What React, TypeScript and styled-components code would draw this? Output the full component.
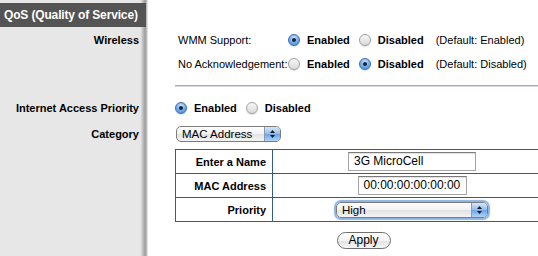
import React from "react";
import styled, { createGlobalStyle } from "styled-components";

const Global = createGlobalStyle`
  html, body { margin: 0; padding: 0; background: #fff; }
  body { font-family: "Liberation Sans", Arial, sans-serif; overflow: hidden; }
`;

const Page = styled.div`
  width: 538px;
  height: 256px;
  overflow: hidden;
  display: grid;
  grid-template-columns: 146px 1fr;
  grid-auto-rows: min-content;
  background: linear-gradient(
    to right,
    #e7e7e7 0,
    #e7e7e7 140px,
    #dedede 141px,
    #bdbdbd 143px,
    #9c9c9c 145px,
    #c4c4c4 147px,
    #ffffff 148px,
    #ffffff 100%
  );
  color: #000;
`;

const TitleCell = styled.div`
  height: 28px;
  padding-top: 3px;
  box-sizing: border-box;
`;

const Title = styled.div`
  height: 24px;
  background: #545454;
  color: #fff;
  font-weight: bold;
  font-size: 12px;
  letter-spacing: -0.15px;
  line-height: 24px;
  padding-left: 4px;
  white-space: nowrap;
`;

const Label = styled.div<{ $h: number }>`
  height: ${(p) => p.$h}px;
  display: flex;
  align-items: center;
  justify-content: flex-end;
  padding-right: 7px;
  font-size: 11px;
  font-weight: bold;
  white-space: nowrap;
`;

const Cell = styled.div<{ $h?: number; $pad?: number }>`
  ${(p) => (p.$h ? `height: ${p.$h}px;` : "")}
  display: flex;
  align-items: center;
  padding-left: ${(p) => p.$pad ?? 29}px;
  font-size: 11px;
  white-space: nowrap;
`;

const FieldName = styled.span`
  width: 110px;
  flex: none;
`;

const Option = styled.label<{ $gap?: number }>`
  display: inline-flex;
  align-items: center;
  gap: 7px;
  margin-right: ${(p) => p.$gap ?? 9}px;
  font-weight: bold;
`;

const Radio = styled.span<{ $on?: boolean }>`
  width: 12px;
  height: 12px;
  border-radius: 50%;
  flex: none;
  box-sizing: border-box;
  position: relative;
  border: 1px solid ${(p) => (p.$on ? "#3b6fb5" : "#a0a0a0")};
  background: ${(p) =>
    p.$on
      ? "radial-gradient(circle at 50% 30%, #d6e8fc 0, #86b6ec 40%, #3d82d6 100%)"
      : "linear-gradient(#f7f7f7, #dadada)"};
  box-shadow: 0 1px 1px rgba(0, 0, 0, 0.15);
  &::after {
    content: "";
    display: ${(p) => (p.$on ? "block" : "none")};
    position: absolute;
    left: 50%;
    top: 50%;
    width: 4px;
    height: 4px;
    margin: -2px 0 0 -2px;
    border-radius: 50%;
    background: #15233e;
  }
`;

const Hint = styled.span`
  margin-left: 1px;
`;

const SeparatorCell = styled.div`
  height: 18px;
  padding-left: 29px;
  padding-top: 9px;
  box-sizing: border-box;
`;

const Rule = styled.div`
  border-top: 1px solid #a9a9bb;
  box-shadow: 0 1px 0 #d8d8e2;
`;

const Select = styled.div<{ $w: number; $focus?: boolean }>`
  width: ${(p) => p.$w}px;
  height: 16px;
  box-sizing: border-box;
  border: 1px solid #7d7d7d;
  border-radius: 5px;
  background: linear-gradient(#ffffff 0, #f1f1f1 50%, #e2e2e2 51%, #f4f4f4 100%);
  display: flex;
  align-items: center;
  font-size: 11.5px;
  overflow: hidden;
  text-align: left;
  ${(p) => (p.$focus ? "box-shadow: 0 0 1px 2px #8cb4e6;" : "")}
`;

const SelectText = styled.span`
  flex: 1;
  padding-left: 5px;
  line-height: 14px;
  text-align: left;
`;

const SelectArrows = styled.span`
  width: 15px;
  height: 100%;
  border-left: 1px solid #8a9ab0;
  background: linear-gradient(#d7e7fa 0, #8fbbed 50%, #6aa3e6 51%, #b3d3f6 100%);
  display: flex;
  align-items: center;
  justify-content: center;
`;

const TableWrap = styled.div`
  padding-left: 29px;
  padding-top: 3px;
`;

const Table = styled.table`
  width: 377px;
  border-collapse: collapse;
  font-size: 11px;
`;

const Td = styled.td<{ $label?: boolean }>`
  border: 1px solid #2f5e8c;
  height: 24px;
  padding: 0 6px 0 0;
  box-sizing: border-box;
  ${(p) =>
    p.$label
      ? "width: 97px; text-align: right; font-weight: bold;"
      : "text-align: center;"}
`;

const Centered = styled.div`
  display: flex;
  justify-content: center;
  padding-left: 6px;
`;

const TextInput = styled.div<{ $w: number }>`
  width: ${(p) => p.$w}px;
  height: 19px;
  box-sizing: border-box;
  border: 1px solid #a5a5a5;
  border-top-color: #7a7a7a;
  box-shadow: inset 0 1px 1px rgba(0, 0, 0, 0.12);
  background: #fff;
  font-size: 12px;
  line-height: 17px;
  text-align: left;
  padding-left: 5px;
`;

const ApplyRow = styled.div`
  width: 377px;
  padding-left: 29px;
  padding-top: 10px;
  display: flex;
  justify-content: center;
`;

const Button = styled.button`
  width: 54px;
  height: 17px;
  border: 1px solid #6f6f6f;
  border-radius: 9px;
  background: linear-gradient(#ffffff 0, #f3f3f3 50%, #e0e0e0 51%, #f6f6f6 100%);
  font-family: "Liberation Sans", Arial, sans-serif;
  font-size: 12px;
  padding: 0;
  line-height: 15px;
  color: #000;
`;

const Arrows = () => (
  <svg width="7" height="10" viewBox="0 0 7 10">
    <path d="M3.5 1 L6 4 H1 Z" fill="#1a1a1a" />
    <path d="M3.5 9 L6 6 H1 Z" fill="#1a1a1a" />
  </svg>
);

export default function App() {
  return (
    <>
      <Global />
      <Page>
        <TitleCell>
          <Title>QoS (Quality of Service)</Title>
        </TitleCell>
        <div />

        <Label $h={24}>Wireless</Label>
        <Cell $h={24} $pad={32}>
          <FieldName>WMM Support:</FieldName>
          <Option>
            <Radio $on />
            Enabled
          </Option>
          <Option $gap={11}>
            <Radio />
            Disabled
          </Option>
          <Hint>(Default: Enabled)</Hint>
        </Cell>

        <div />
        <Cell $h={24} $pad={32}>
          <FieldName>No Acknowledgement:</FieldName>
          <Option>
            <Radio />
            Enabled
          </Option>
          <Option $gap={11}>
            <Radio $on />
            Disabled
          </Option>
          <Hint>(Default: Disabled)</Hint>
        </Cell>

        <div />
        <SeparatorCell>
          <Rule />
        </SeparatorCell>

        <Label $h={28}>Internet Access Priority</Label>
        <Cell $h={28} $pad={29}>
          <Option>
            <Radio $on />
            Enabled
          </Option>
          <Option>
            <Radio />
            Disabled
          </Option>
        </Cell>

        <Label $h={24}>Category</Label>
        <Cell $h={24} $pad={30}>
          <Select $w={105}>
            <SelectText>MAC Address</SelectText>
            <SelectArrows>
              <Arrows />
            </SelectArrows>
          </Select>
        </Cell>

        <div />
        <TableWrap>
          <Table>
            <tbody>
              <tr>
                <Td $label>Enter a Name</Td>
                <Td>
                  <Centered>
                    <TextInput $w={128}>3G MicroCell</TextInput>
                  </Centered>
                </Td>
              </tr>
              <tr>
                <Td $label>MAC Address</Td>
                <Td>
                  <Centered>
                    <TextInput $w={109}>00:00:00:00:00:00</TextInput>
                  </Centered>
                </Td>
              </tr>
              <tr>
                <Td $label>Priority</Td>
                <Td>
                  <Centered>
                    <Select $w={152} $focus>
                      <SelectText>High</SelectText>
                      <SelectArrows>
                        <Arrows />
                      </SelectArrows>
                    </Select>
                  </Centered>
                </Td>
              </tr>
            </tbody>
          </Table>
        </TableWrap>

        <div />
        <ApplyRow>
          <Button>Apply</Button>
        </ApplyRow>
      </Page>
    </>
  );
}
